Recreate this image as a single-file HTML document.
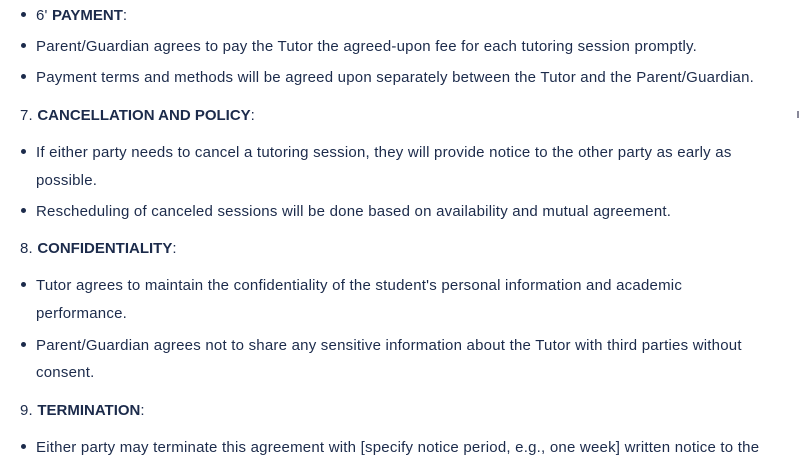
<!DOCTYPE html>
<html><head><meta charset="utf-8"><style>
html,body{margin:0;padding:0;background:#fff;width:800px;height:468px;overflow:hidden;position:relative}
.l{position:absolute;left:36px;font-family:"Liberation Sans",sans-serif;font-size:15px;letter-spacing:0.22px;color:#1c2b4b;white-space:nowrap;line-height:20px;margin-top:2px}
.b::before{content:"";position:absolute;left:-15px;top:6px;width:5px;height:5px;border-radius:50%;background:#1c2b4b}
.n{left:20px}
b{font-weight:bold;letter-spacing:0}
</style></head><body>
<div class="l b" style="top:4px">6' <b>PAYMENT</b>:</div>
<div class="l b" style="top:35px">Parent/Guardian agrees to pay the Tutor the agreed-upon fee for each tutoring session promptly.</div>
<div class="l b" style="top:66px">Payment terms and methods will be agreed upon separately between the Tutor and the Parent/Guardian.</div>
<div class="l n" style="top:104px">7. <b>CANCELLATION AND POLICY</b>:</div>
<div class="l b" style="top:141px">If either party needs to cancel a tutoring session, they will provide notice to the other party as early as</div>
<div class="l" style="top:169px">possible.</div>
<div class="l b" style="top:200px">Rescheduling of canceled sessions will be done based on availability and mutual agreement.</div>
<div class="l n" style="top:237px">8. <b>CONFIDENTIALITY</b>:</div>
<div class="l b" style="top:274px">Tutor agrees to maintain the confidentiality of the student's personal information and academic</div>
<div class="l" style="top:302px">performance.</div>
<div class="l b" style="top:334px">Parent/Guardian agrees not to share any sensitive information about the Tutor with third parties without</div>
<div class="l" style="top:361px">consent.</div>
<div class="l n" style="top:399px">9. <b>TERMINATION</b>:</div>
<div class="l b" style="top:436px">Either party may terminate this agreement with [specify notice period, e.g., one week] written notice to the</div>
<div style="position:absolute;left:797px;top:111px;width:2px;height:7px;background:#889"></div>
</body></html>
